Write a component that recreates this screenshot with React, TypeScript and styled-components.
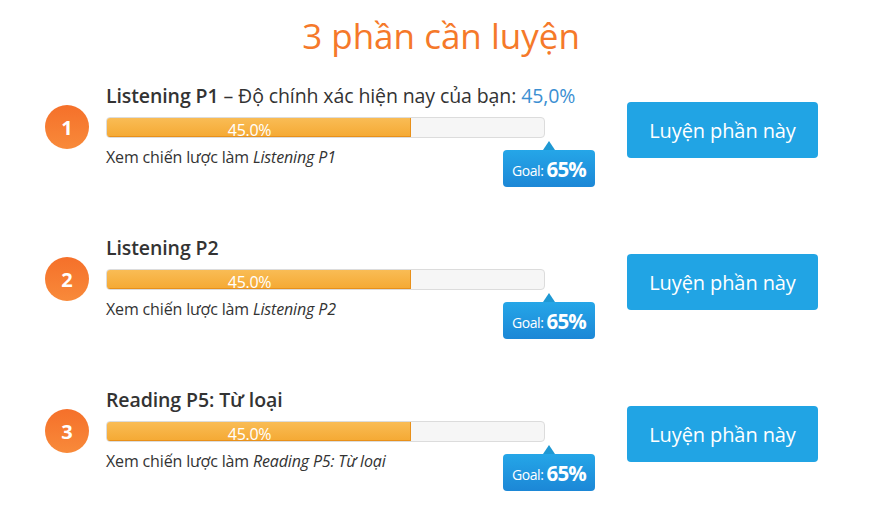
import React from "react";
import styled, { createGlobalStyle } from "styled-components";

const Global = createGlobalStyle`
  html, body { margin: 0; padding: 0; background: #fff; }
  body { font-family: "Open Sans", "Noto Sans", sans-serif; color: #333; }
`;

const Page = styled.div`
  width: 878px;
  height: 508px;
  overflow: hidden;
  box-sizing: border-box;
  padding-top: 10px;
`;

const Heading = styled.h1`
  margin: 0;
  text-align: center;
  font-weight: 400;
  font-size: 35px;
  line-height: 52px;
  color: #f5792a;
  letter-spacing: 0;
  padding-left: 4px;
`;

const List = styled.div`
  display: flex;
  flex-direction: column;
  gap: 46px;
  margin-top: 22px;
`;

const Row = styled.div`
  display: grid;
  grid-template-columns: 44px 504px 191px;
  column-gap: 17px;
  padding-left: 45px;
  height: 106px;
`;

const Circle = styled.div`
  width: 44px;
  height: 44px;
  margin-top: 21px;
  border-radius: 50%;
  background: linear-gradient(#f5702a, #f88a3a);
  color: #fff;
  font-weight: 700;
  font-size: 20px;
  display: flex;
  align-items: center;
  justify-content: center;
`;

const Content = styled.div`
  display: flex;
  flex-direction: column;
  width: 439px;
`;

const Title = styled.div`
  font-size: 19.5px;
  line-height: 24px;
  white-space: nowrap;
  letter-spacing: -0.1px;
  color: #333;
  b { font-weight: 600; }
`;

const Accuracy = styled.span`
  color: #3b8fd2;
`;

const BarWrap = styled.div`
  position: relative;
  margin-top: 9px;
`;

const Bar = styled.div`
  height: 19px;
  border: 1px solid #dcdcdc;
  border-radius: 4px;
  background: #f6f6f6;
  overflow: hidden;
`;

const Fill = styled.div`
  height: 100%;
  background: linear-gradient(#f9bc55, #f5aa35);
  border-right: 1px solid #e8901a;
  border-bottom: 1px solid #e8901a;
  box-sizing: border-box;
  color: #fff;
  font-size: 16px;
  line-height: 25px;
  text-align: center;
  letter-spacing: -0.3px;
  padding-right: 18px;
`;

const Goal = styled.div`
  position: absolute;
  top: 33px;
  right: -50px;
  width: 92px;
  height: 37px;
  border-radius: 4px;
  background: linear-gradient(#25a6e8, #1c87d6);
  color: #fff;
  display: flex;
  align-items: center;
  justify-content: center;
  gap: 3px;
  &::before {
    content: "";
    position: absolute;
    top: -9px;
    left: 40px;
    border-left: 6px solid transparent;
    border-right: 6px solid transparent;
    border-bottom: 9px solid #1e98d3;
  }
`;

const GoalLabel = styled.span`
  font-size: 14px;
  letter-spacing: -0.4px;
  padding-top: 4px;
`;

const GoalValue = styled.span`
  font-size: 20.5px;
  font-weight: 700;
  letter-spacing: -0.8px;
`;

const Sub = styled.div`
  margin-top: 9px;
  font-size: 16px;
  line-height: 20px;
  letter-spacing: -0.15px;
  color: #333;
  i { font-style: italic; }
`;

const Button = styled.button`
  margin-top: 18px;
  width: 191px;
  height: 56px;
  border: none;
  border-radius: 4px;
  background: #21a4e4;
  color: #fff;
  font-family: inherit;
  font-size: 20px;
  letter-spacing: -0.1px;
  cursor: pointer;
`;

type Item = { n: number; name: string; showAcc?: boolean };

const items: Item[] = [
  { n: 1, name: "Listening P1", showAcc: true },
  { n: 2, name: "Listening P2" },
  { n: 3, name: "Reading P5: Từ loại" },
];

export default function App() {
  return (
    <Page>
      <Global />
      <Heading>3 phần cần luyện</Heading>
      <List>
        {items.map((it) => (
          <Row key={it.n}>
            <Circle>{it.n}</Circle>
            <Content>
              <Title>
                <b>{it.name}</b>
                {it.showAcc && (
                  <>
                    {" "}– Độ chính xác hiện nay của bạn: <Accuracy>45,0%</Accuracy>
                  </>
                )}
              </Title>
              <BarWrap>
                <Bar>
                  <Fill style={{ width: "304px" }}>45.0%</Fill>
                </Bar>
                <Goal>
                  <GoalLabel>Goal:</GoalLabel>
                  <GoalValue>65%</GoalValue>
                </Goal>
              </BarWrap>
              <Sub>
                Xem chiến lược làm <i>{it.name}</i>
              </Sub>
            </Content>
            <Button>Luyện phần này</Button>
          </Row>
        ))}
      </List>
    </Page>
  );
}
